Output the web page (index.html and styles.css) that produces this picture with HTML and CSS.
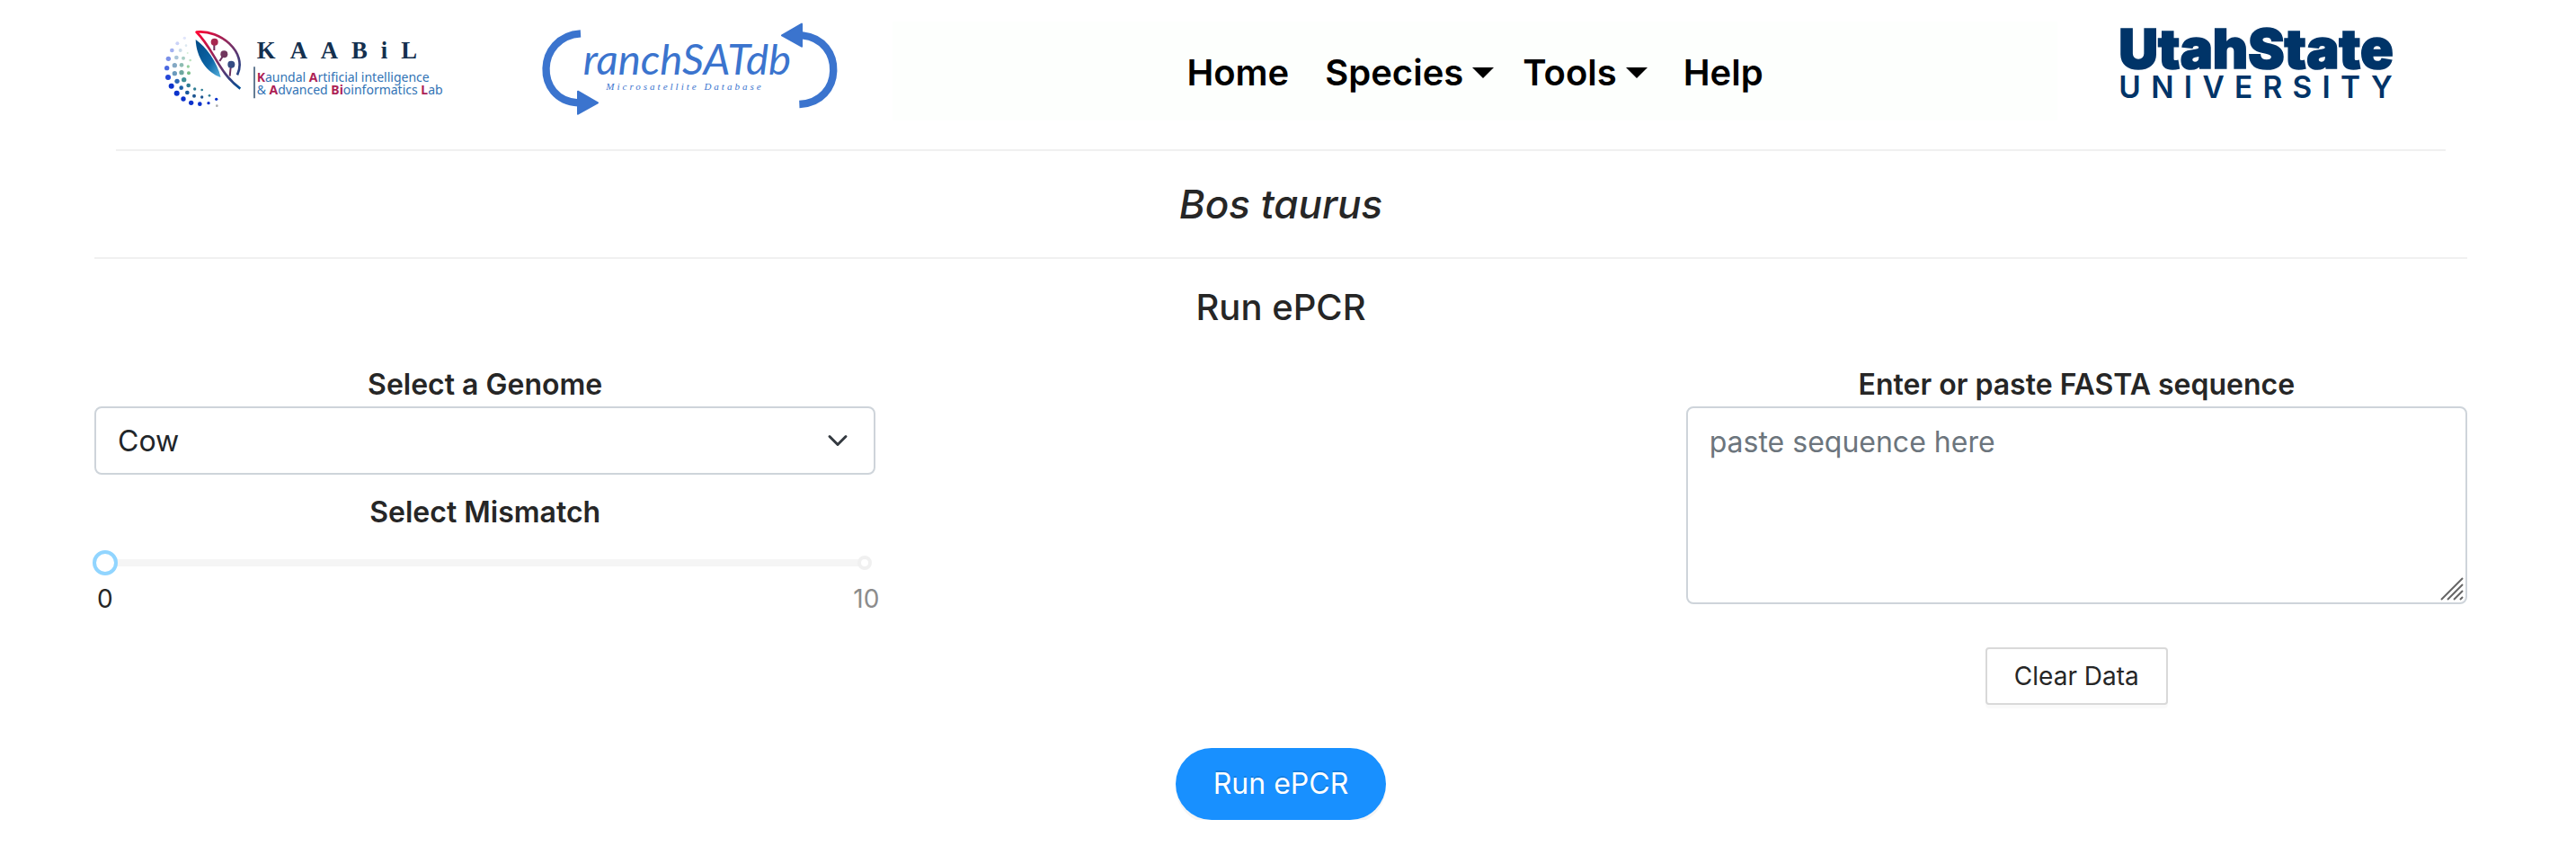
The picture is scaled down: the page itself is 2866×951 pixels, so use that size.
FILE: index.html
```html
<!DOCTYPE html>
<html lang="en">
<head>
<meta charset="utf-8">
<meta name="viewport" content="width=device-width, initial-scale=1">
<title>ranchSATdb - Run ePCR</title>
<link rel="stylesheet" href="styles.css">
</head>
<body>
<header class="header">
  <a class="logo" href="#kaabil" aria-label="KAABiL">
    <svg class="logo-art" viewBox="0 12 1050 330">
      <defs>
        <linearGradient id="leaf" x1="0" y1="0" x2="1" y2="1"><stop offset="0" stop-color="#ff0030"/><stop offset=".45" stop-color="#8a2a5e"/><stop offset="1" stop-color="#004f96"/></linearGradient>
        <linearGradient id="blade" x1="0" y1="0" x2="1" y2="1"><stop offset="0" stop-color="#004a86"/><stop offset=".6" stop-color="#0d65a6"/><stop offset="1" stop-color="#58b4de"/></linearGradient>
      </defs>
      <g fill="#0b32cc">
        <circle cx="62" cy="227" r="9"/><circle cx="80" cy="251" r="9"/><circle cx="102" cy="270" r="8"/><circle cx="128" cy="283" r="8"/><circle cx="157" cy="287" r="7"/><circle cx="186" cy="284" r="5"/><circle cx="212" cy="271" r="5"/>
        <circle cx="51" cy="198" r="9" fill="#2446d8"/><circle cx="47" cy="167" r="8" fill="#4a68e0"/><circle cx="52" cy="136" r="8" fill="#7b90e8"/><circle cx="64" cy="108" r="7" fill="#a3b1f0"/><circle cx="82" cy="85" r="6" fill="#cbd3f8"/><circle cx="106" cy="67" r="5" fill="#e0e5fb"/>
      </g>
      <g fill="#2e7d94">
        <circle cx="81" cy="211" r="8" fill="#2c67b4"/><circle cx="95" cy="233" r="7" fill="#1b61a6"/><circle cx="115" cy="249" r="7" fill="#17589c"/><circle cx="138" cy="260" r="6" fill="#1c5490"/><circle cx="164" cy="264" r="5" fill="#1d5590"/><circle cx="189" cy="259" r="4"/>
        <circle cx="73" cy="185" r="8" fill="#6b9abd"/><circle cx="73" cy="158" r="8" fill="#84a8c4"/><circle cx="79" cy="132" r="7" fill="#a9c4d8"/><circle cx="92" cy="108" r="6" fill="#cbdce8"/><circle cx="111" cy="92" r="4" fill="#dce8f0"/>
        <circle cx="104" cy="206" r="8" fill="#3f9096"/><circle cx="119" cy="225" r="7"/><circle cx="140" cy="237" r="5"/><circle cx="164" cy="240" r="4"/>
        <circle cx="96" cy="182" r="8" fill="#6ea79f"/><circle cx="96" cy="157" r="7" fill="#8dbcb2"/><circle cx="102" cy="134" r="6" fill="#a8cec4"/>
        <circle cx="120" cy="184" r="6" fill="#79bd88"/><circle cx="118" cy="162" r="5" fill="#94cf9d"/><circle cx="125" cy="141" r="4" fill="#bce3c0"/><circle cx="116" cy="117" r="3" fill="#d5eed6"/><circle cx="214" cy="293" r="4" fill="#aaa"/>
      </g>
      <path d="M143 72C178 97 214 145 227 198C181 184 145 132 143 72Z" fill="url(#blade)"/>
      <path d="M292 236C220 184 202 101 146 47C224 38 318 114 282 190" fill="none" stroke="url(#leaf)" stroke-width="8" stroke-linejoin="round"/>
      <path d="M205 79V108M238 121L223 144M261 155L257 194" fill="none" stroke="#6b315f" stroke-width="6"/>
      <circle cx="206" cy="80" r="12" fill="#a72750"/><circle cx="238" cy="121" r="12" fill="#71365e"/><circle cx="262" cy="155" r="12" fill="#354c83"/>
      <path d="M339 163V268" stroke="#17395c" stroke-width="4"/>
      <text class="kaabil-name" y="135"><tspan x="347">K</tspan><tspan x="458">A</tspan><tspan x="560">A</tspan><tspan x="663">B</tspan><tspan x="761">i</tspan><tspan x="829">L</tspan></text>
      <text class="kaabil-line" x="347" y="212"><tspan class="initial">K</tspan>aundal <tspan class="initial">A</tspan>rtificial intelligence</text>
      <text class="kaabil-line" x="347" y="254">&amp; <tspan class="initial">A</tspan>dvanced <tspan class="initial">Bi</tspan>oinformatics <tspan class="initial">L</tspan>ab</text>
    </svg>
  </a>
  <a class="logo" href="#home" aria-label="ranchSATdb">
    <svg class="logo-art" viewBox="36 27 1050 330">
      <path d="M168 67C19 76 12 290 160 298" fill="none" stroke="#3b74ce" stroke-width="25"/>
      <path d="M898 303C1046 297 1050 88 908 73" fill="none" stroke="#3b74ce" stroke-width="25"/>
      <path d="M159 260L225 298L159 335ZM906 35V110L840 73Z" fill="#3b74ce" stroke="#3b74ce" stroke-width="6" stroke-linejoin="round"/>
      <text class="ranch-name" x="176" y="205">ranchSATdb</text>
      <text class="ranch-sub" x="253" y="255">Microsatellite Database</text>
    </svg>
  </a>
  <nav class="nav" aria-label="Main">
    <a class="nav-link" href="#home">Home</a>
    <button class="nav-link nav-drop" type="button">Species<span class="caret"></span></button>
    <button class="nav-link nav-drop" type="button">Tools<span class="caret"></span></button>
    <a class="nav-link" href="#help">Help</a>
  </nav>
  <a class="logo" href="#usu" aria-label="Utah State University">
    <svg class="logo-art" viewBox="30 42 990 330">
      <text class="usu-top" x="82" y="197">UtahState</text>
      <text class="usu-bottom" x="82" y="297">UNIVERSITY</text>
    </svg>
  </a>
</header>
<main class="page">
  <h1 class="species">Bos taurus</h1>
  <h2 class="heading">Run ePCR</h2>
  <form class="form">
    <div class="column">
      <label class="label" for="genome">Select a Genome</label>
      <div class="field">
        <select class="control select" id="genome"><option>Cow</option></select>
        <svg class="chevron" viewBox="0 0 16 16"><path d="M2 5l6 6 6-6" fill="none" stroke="#343a40" stroke-width="2" stroke-linecap="round" stroke-linejoin="round"/></svg>
      </div>
      <label class="label mismatch" for="mismatch">Select Mismatch</label>
      <div class="slider">
        <input class="range" id="mismatch" type="range" min="0" max="10" value="0">
        <span class="end-dot"></span>
      </div>
      <div class="marks"><span class="mark mark-on">0</span><span class="mark">10</span></div>
    </div>
    <div class="column sequence">
      <label class="label" for="fasta">Enter or paste FASTA sequence</label>
      <div class="field">
        <textarea class="control textarea" id="fasta" placeholder="paste sequence here"></textarea>
        <svg class="grip" viewBox="0 0 26 26"><path d="M1 25L25 1M8 25L25 8M15 25L25 15M22 25L25 22" fill="none" stroke="#666" stroke-width="2"/></svg>
      </div>
      <button class="clear" type="reset">Clear Data</button>
    </div>
    <button class="run" type="button">Run ePCR</button>
  </form>
</main>
</body>
</html>
```

FILE: styles.css
```css
* { box-sizing: border-box; }

body {
  margin: 0;
  padding: 0 121px 0 105px;
  background: #fff;
  color: #262626;
  font: 32px/48px Inter, "Liberation Sans", sans-serif;
}

button, select, textarea { font: inherit; color: inherit; }

.header {
  display: grid;
  grid-template-columns: 1fr 1fr 3fr 1fr;
  margin: 0 24px;
  padding: 24px 0 32px;
  border-bottom: 2px solid #f0f0f0;
}

.logo { display: flex; justify-content: center; }
.logo-art { height: 110px; overflow: visible; }

.kaabil-name { font: bold 80px "Liberation Serif", serif; fill: #14304f; }
.kaabil-line { font: 42px "Noto Sans", sans-serif; fill: #3273b5; }
.initial { font-weight: 700; fill: #ad1f55; }
.ranch-name { font: italic 142px Lato, sans-serif; fill: #3b74ce; }
.ranch-sub { font: italic 33px "Liberation Serif", serif; letter-spacing: 9px; fill: #3b74ce; }
.usu-top { font: 900 182px Inter, sans-serif; fill: #003468; stroke: #003468; stroke-width: 5px; }
.usu-bottom { font: 600 100px Inter, sans-serif; letter-spacing: 34px; fill: #003468; }

.nav {
  display: flex;
  justify-content: center;
  align-items: center;
  padding-top: 4px;
  background: #fdfffd;
}

.nav-link {
  display: flex;
  align-items: center;
  gap: 10px;
  padding: 0 24px;
  border: 0;
  background: none;
  color: #000;
  font-size: 40px;
  font-weight: 600;
  text-decoration: none;
}

.nav-drop { padding: 0 16px; }

.caret {
  border: 12px solid transparent;
  border-top-color: #000;
  border-bottom: 0;
}

.species {
  margin: 0;
  padding: 30px 0;
  border-bottom: 2px solid #f0f0f0;
  font-size: 44px;
  font-style: italic;
  font-weight: 500;
  line-height: 58px;
  text-align: center;
}

.heading {
  margin: 30px 0 38px;
  font-size: 40px;
  font-weight: 500;
  text-align: center;
}

.form {
  display: grid;
  grid-template-columns: repeat(3, 1fr);
  column-gap: 16px;
  row-gap: 48px;
}

.column { display: flex; flex-direction: column; }
.sequence { grid-column: 3; }
.label { font-weight: 600; text-align: center; }
.mismatch { margin-top: 18px; }
.field { position: relative; display: flex; }

.control {
  width: 100%;
  border: 2px solid #ced4da;
  border-radius: 8px;
  background: #fff;
  color: #212529;
}

.select { height: 76px; padding: 2px 24px 0; appearance: none; }
.textarea { height: 220px; padding: 14px 24px; resize: none; }
.textarea::placeholder { color: #6c757d; opacity: 1; }

.chevron {
  position: absolute;
  top: 26px;
  right: 30px;
  width: 24px;
  height: 24px;
  pointer-events: none;
}

.grip {
  position: absolute;
  right: 4px;
  bottom: 4px;
  width: 26px;
  height: 26px;
  pointer-events: none;
}

.slider { position: relative; display: flex; margin: 18px -2px 0; }

.range {
  width: 100%;
  height: 28px;
  margin: 0;
  background: none;
  appearance: none;
}

.range::-webkit-slider-runnable-track {
  height: 8px;
  background: linear-gradient(#f5f5f5, #f5f5f5) center / calc(100% - 28px) 8px no-repeat;
}

.range::-webkit-slider-thumb {
  width: 28px;
  height: 28px;
  margin-top: -10px;
  border: 4px solid #91d5ff;
  border-radius: 50%;
  background: #fff;
  appearance: none;
}

.end-dot {
  position: absolute;
  top: 6px;
  right: 6px;
  width: 16px;
  height: 16px;
  border: 4px solid #f0f0f0;
  border-radius: 50%;
  background: #fff;
  pointer-events: none;
}

.marks {
  display: flex;
  justify-content: space-between;
  margin: 10px -4px 0 3px;
  font-size: 28px;
  line-height: 32px;
}

.mark { color: #8c8c8c; }
.mark-on { color: #262626; }

.clear {
  align-self: center;
  height: 64px;
  margin-top: 48px;
  padding: 0 30px;
  border: 2px solid #d9d9d9;
  border-radius: 4px;
  background: #fff;
  box-shadow: 0 4px 0 rgba(0, 0, 0, .02);
  font-size: 28px;
}

.run {
  grid-column: 2;
  justify-self: center;
  height: 80px;
  padding: 0 42px;
  border: 0;
  border-radius: 40px;
  background: #1890ff;
  box-shadow: 0 4px 0 rgba(0, 0, 0, .04);
  color: #fff;
  text-shadow: 0 -2px 0 rgba(0, 0, 0, .12);
}
```
